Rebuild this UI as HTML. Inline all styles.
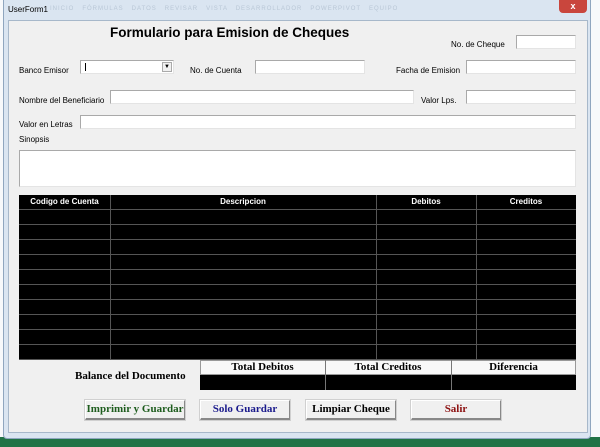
<!DOCTYPE html>
<html><head><meta charset="utf-8"><style>
*{margin:0;padding:0;box-sizing:border-box}
body{width:600px;height:447px;overflow:hidden;background:#f4f6f8;position:relative;font-family:"Liberation Sans",sans-serif;font-size:8px;color:#000}
.a{position:absolute}
.in{position:absolute;background:#fff;border:1px solid #a9a9a9;border-right-color:#e4e4e4;border-bottom-color:#e4e4e4}
.lb{position:absolute;font-size:8px;white-space:nowrap}
.g{position:absolute;background:#000}
.btn{position:absolute;height:20px;background:#f0f0f0;border:1px solid #fff;border-right:1px solid #888;border-bottom:2px solid #888;font-family:"Liberation Serif",serif;font-weight:bold;font-size:11px;text-align:center;line-height:17px;box-shadow:0 0 0 1px #d0d0d0}
</style></head><body>
<div class="a" style="left:0;top:0;width:600px;height:447px;background:#f7f9fb"></div>
<div class="a" style="left:0;top:437px;width:600px;height:10px;background:#217346"></div>
<div class="a" style="left:3px;top:0;width:588px;height:439px;background:#dae5f1;border:1px solid #8fa6bf;border-top:none;border-radius:0 0 4px 4px"></div>
<div class="lb" style="left:8px;top:5px;font-size:8px;color:#000">UserForm1</div>
<div class="lb" style="left:50px;top:6px;color:#b9c7d6;font-size:6px;letter-spacing:1px">INICIO &nbsp; FÓRMULAS &nbsp; DATOS &nbsp; REVISAR &nbsp; VISTA &nbsp; DESARROLLADOR &nbsp; POWERPIVOT &nbsp; EQUIPO</div>
<div class="a" style="left:559px;top:0;width:28px;height:13px;background:#c9463d;border-radius:0 0 4px 4px;color:#fff;font-size:9px;font-weight:bold;text-align:center;line-height:12px">x</div>
<div class="a" style="left:8px;top:20px;width:580px;height:413px;background:#f0f0f0;border:1px solid #a7b8ca"></div>

<div class="lb" style="left:110px;top:25px;font-size:13.5px;font-weight:bold">Formulario para Emision de Cheques</div>
<div class="lb" style="left:451px;top:40px">No. de Cheque</div>
<div class="in" style="left:516px;top:35px;width:60px;height:14px"></div>
<div class="lb" style="left:19px;top:66px">Banco Emisor</div>
<div class="in" style="left:80px;top:60px;width:94px;height:14px"><div class="a" style="left:4px;top:2px;width:1px;height:8px;background:#000"></div><div class="a" style="right:1px;top:1px;width:10px;height:10px;background:#f0f0f0;border:1px solid #aaa;font-size:6px;text-align:center;line-height:9px">▼</div></div>
<div class="lb" style="left:190px;top:66px">No. de Cuenta</div>
<div class="in" style="left:255px;top:60px;width:110px;height:14px"></div>
<div class="lb" style="left:396px;top:66px">Facha de Emision</div>
<div class="in" style="left:466px;top:60px;width:110px;height:14px"></div>
<div class="lb" style="left:19px;top:96px">Nombre del Beneficiario</div>
<div class="in" style="left:110px;top:90px;width:304px;height:14px"></div>
<div class="lb" style="left:421px;top:96px">Valor Lps.</div>
<div class="in" style="left:466px;top:90px;width:110px;height:14px"></div>
<div class="lb" style="left:19px;top:120px">Valor en Letras</div>
<div class="in" style="left:80px;top:115px;width:496px;height:14px"></div>
<div class="lb" style="left:19px;top:135px">Sinopsis</div>
<div class="in" style="left:19px;top:150px;width:557px;height:37px"></div>

<div class="g" style="left:19px;top:195px;width:557px;height:165px"></div>
<div class="a" style="left:19px;top:195px;width:557px;height:165px;background:
repeating-linear-gradient(to bottom,transparent 0,transparent 14px,#555 14px,#555 15px);"></div>
<div class="a" style="left:110px;top:195px;width:1px;height:165px;background:#555"></div>
<div class="a" style="left:376px;top:195px;width:1px;height:165px;background:#555"></div>
<div class="a" style="left:476px;top:195px;width:1px;height:165px;background:#555"></div>
<div class="lb" style="left:19px;top:197px;width:91px;text-align:center;color:#fff;font-weight:bold;font-size:8px">Codigo de Cuenta</div>
<div class="lb" style="left:110px;top:197px;width:266px;text-align:center;color:#fff;font-weight:bold;font-size:8px">Descripcion</div>
<div class="lb" style="left:376px;top:197px;width:100px;text-align:center;color:#fff;font-weight:bold;font-size:8px">Debitos</div>
<div class="lb" style="left:476px;top:197px;width:100px;text-align:center;color:#fff;font-weight:bold;font-size:8px">Creditos</div>

<div class="lb" style="left:75px;top:370px;font-family:'Liberation Serif',serif;font-weight:bold;font-size:11px">Balance del Documento</div>
<div class="a" style="left:200px;top:360px;width:376px;height:15px;background:#f8f8f8;border:1px solid #999"></div>
<div class="g" style="left:200px;top:375px;width:376px;height:15px"></div>
<div class="a" style="left:325px;top:360px;width:1px;height:30px;background:#777"></div>
<div class="a" style="left:451px;top:360px;width:1px;height:30px;background:#777"></div>
<div class="lb" style="left:200px;top:361px;width:125px;text-align:center;font-family:'Liberation Serif',serif;font-weight:bold;font-size:11px">Total Debitos</div>
<div class="lb" style="left:325px;top:361px;width:126px;text-align:center;font-family:'Liberation Serif',serif;font-weight:bold;font-size:11px">Total Creditos</div>
<div class="lb" style="left:451px;top:361px;width:125px;text-align:center;font-family:'Liberation Serif',serif;font-weight:bold;font-size:11px">Diferencia</div>

<div class="btn" style="left:85px;top:400px;width:100px;color:#1d5c1d">Imprimir y Guardar</div>
<div class="btn" style="left:200px;top:400px;width:90px;color:#1a1a8c">Solo Guardar</div>
<div class="btn" style="left:306px;top:400px;width:90px;color:#000">Limpiar Cheque</div>
<div class="btn" style="left:411px;top:400px;width:90px;color:#8c1010">Salir</div>
</body></html>
